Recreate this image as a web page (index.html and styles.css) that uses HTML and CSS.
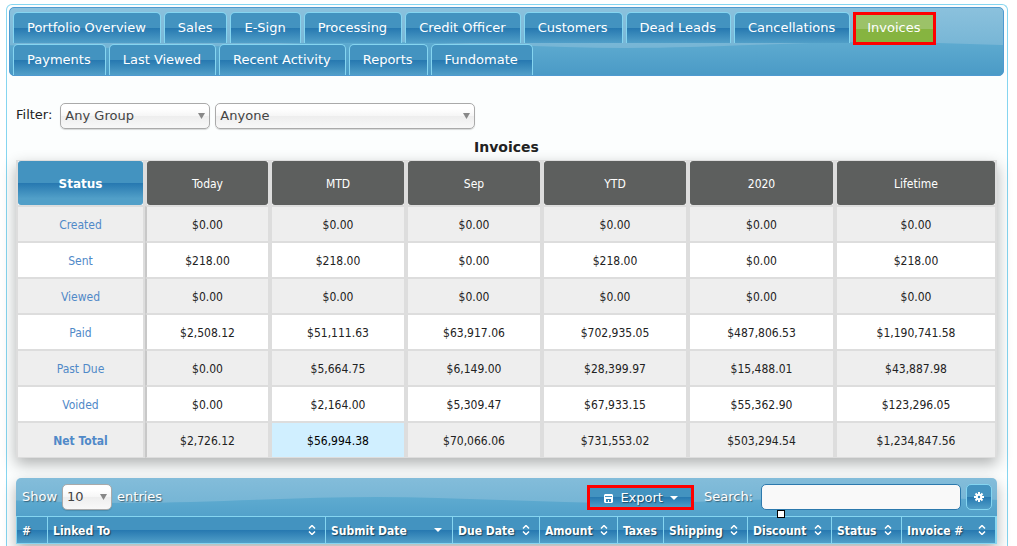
FILE: index.html
```html
<!DOCTYPE html>
<html lang="en">
<head>
<meta charset="utf-8">
<title>Invoices</title>
<link rel="stylesheet" href="styles.css">
</head>
<body>
<div class="panel">
  <nav class="tabs gloss">
    <a class="tab" href="#">Portfolio Overview</a>
    <a class="tab" href="#">Sales</a>
    <a class="tab" href="#">E-Sign</a>
    <a class="tab" href="#">Processing</a>
    <a class="tab" href="#">Credit Officer</a>
    <a class="tab" href="#">Customers</a>
    <a class="tab" href="#">Dead Leads</a>
    <a class="tab" href="#">Cancellations</a>
    <a class="tab tab-active marked" href="#">Invoices</a>
    <a class="tab" href="#">Payments</a>
    <a class="tab" href="#">Last Viewed</a>
    <a class="tab" href="#">Recent Activity</a>
    <a class="tab" href="#">Reports</a>
    <a class="tab" href="#">Fundomate</a>
  </nav>
  <main class="content">
    <form class="filter">
      <label for="group">Filter:</label>
      <select id="group" class="select select-group"><option>Any Group</option></select>
      <select id="user" class="select select-user" aria-label="User"><option>Anyone</option></select>
    </form>
    <h1 class="title">Invoices</h1>
    <table class="summary">
      <colgroup>
        <col class="c-status"><col class="c-today"><col class="c-mtd"><col class="c-mtd"><col class="c-ytd"><col class="c-year"><col class="c-life">
      </colgroup>
      <thead>
        <tr>
          <th><div class="head head-status">Status</div></th>
          <th><div class="head">Today</div></th>
          <th><div class="head">MTD</div></th>
          <th><div class="head">Sep</div></th>
          <th><div class="head">YTD</div></th>
          <th><div class="head">2020</div></th>
          <th><div class="head">Lifetime</div></th>
        </tr>
      </thead>
      <tbody>
        <tr><td><a href="#">Created</a></td><td>$0.00</td><td>$0.00</td><td>$0.00</td><td>$0.00</td><td>$0.00</td><td>$0.00</td></tr>
        <tr><td><a href="#">Sent</a></td><td>$218.00</td><td>$218.00</td><td>$0.00</td><td>$218.00</td><td>$0.00</td><td>$218.00</td></tr>
        <tr><td><a href="#">Viewed</a></td><td>$0.00</td><td>$0.00</td><td>$0.00</td><td>$0.00</td><td>$0.00</td><td>$0.00</td></tr>
        <tr><td><a href="#">Paid</a></td><td>$2,508.12</td><td>$51,111.63</td><td>$63,917.06</td><td>$702,935.05</td><td>$487,806.53</td><td>$1,190,741.58</td></tr>
        <tr><td><a href="#">Past Due</a></td><td>$0.00</td><td>$5,664.75</td><td>$6,149.00</td><td>$28,399.97</td><td>$15,488.01</td><td>$43,887.98</td></tr>
        <tr><td><a href="#">Voided</a></td><td>$0.00</td><td>$2,164.00</td><td>$5,309.47</td><td>$67,933.15</td><td>$55,362.90</td><td>$123,296.05</td></tr>
        <tr><td><a class="net" href="#">Net Total</a></td><td>$2,726.12</td><td class="hover">$56,994.38</td><td>$70,066.06</td><td>$731,553.02</td><td>$503,294.54</td><td>$1,234,847.56</td></tr>
      </tbody>
    </table>
    <section class="list">
      <div class="toolbar gloss">
        <label for="length">Show</label>
        <select id="length" class="select select-length"><option>10</option></select>
        <span>entries</span>
        <button class="export marked" type="button">
          <svg width="9" height="9" viewBox="0 0 9 9" aria-hidden="true"><path fill="#fff" fill-rule="evenodd" d="M1 0h7l1 1v7l-1 1H1L0 8V1zM1 2v1h7V2zM2 5v3h2V6h1v2h2V5z"/></svg>
          Export
          <svg width="8" height="4" viewBox="0 0 8 4" aria-hidden="true"><path fill="#fff" d="M0 0h8L4 4z"/></svg>
        </button>
        <label class="search-label" for="search">Search:</label>
        <div class="search-box"><input id="search" class="search" type="text"><span class="handle"></span></div>
        <button class="gear" type="button" aria-label="Settings">
          <svg width="10" height="10" viewBox="-5 -5 10 10" aria-hidden="true"><g stroke="#fff" stroke-width="2"><path d="M0-5V5M-5 0H5M-3.5-3.5l7 7M-3.5 3.5l7-7"/></g><circle r="3.3" fill="#fff"/><circle r="1.2" fill="#2c81b7"/></svg>
        </button>
      </div>
      <table class="grid">
        <colgroup>
          <col class="g-num"><col class="g-linked"><col class="g-submit"><col class="g-due"><col class="g-amount"><col class="g-taxes"><col class="g-ship"><col class="g-ship"><col class="g-status"><col class="g-inv">
        </colgroup>
        <thead>
          <tr>
            <th>#</th>
            <th class="sort">Linked To</th>
            <th class="sort-desc">Submit Date</th>
            <th class="sort">Due Date</th>
            <th class="sort">Amount</th>
            <th>Taxes</th>
            <th class="sort">Shipping</th>
            <th class="sort">Discount</th>
            <th class="sort">Status</th>
            <th class="sort">Invoice #</th>
          </tr>
        </thead>
      </table>
    </section>
  </main>
</div>
</body>
</html>
```
FILE: styles.css
```css
* { box-sizing: border-box; }

body {
  margin: 0;
  padding: 4px 9px 0 6px;
  background: #fff;
  color: #222;
  font: 13px/16px Verdana, "DejaVu Sans", sans-serif;
}

.panel {
  min-height: calc(100vh - 4px);
  padding: 2px 3px 0 2px;
  border: 1px solid #85d5f0;
  border-bottom: 0;
  border-radius: 6px 6px 0 0;
  background: #fcfefe;
}

.gloss {
  background: #519fca url("data:image/svg+xml,%3Csvg xmlns='http://www.w3.org/2000/svg' width='500' height='100'%3E%3Cdefs%3E%3ClinearGradient id='a' x2='0' y2='1'%3E%3Cstop stop-color='%2393c6e0'/%3E%3Cstop offset='1' stop-color='%2376b5d5'/%3E%3C/linearGradient%3E%3ClinearGradient id='b' x2='0' y2='1'%3E%3Cstop stop-color='%235eabd0'/%3E%3Cstop offset='1' stop-color='%234092c1'/%3E%3C/linearGradient%3E%3C/defs%3E%3Cpath fill='url(%23b)' d='M0 50h500v50H0z'/%3E%3Cpath fill='url(%23a)' d='M-130 0H620V50C540 50 450 56 370 56C290 56 200 50 120 50C40 50-50 56-130 56z'/%3E%3C/svg%3E") repeat-x 50% 50%;
}

.tabs {
  display: flex;
  flex-wrap: wrap;
  gap: 1px 3px;
  padding: 4px 3px 0;
  border: 1px solid #4f9ad0;
  border-radius: 5px;
}

.tab {
  height: 31px;
  padding: 7px 14px 0 13px;
  border: 1px solid #85d5f0;
  border-bottom: 0;
  border-radius: 5px 5px 0 0;
  background: linear-gradient(#4393c0 0 50%, #2678b0 50%, #519fc8);
  color: #fff;
  text-decoration: none;
}

.tab-active {
  border-color: #a6c935;
  background: linear-gradient(#9cc268 0 55%, #86b440 55%);
}

.marked { position: relative; }

.marked::after {
  content: "";
  position: absolute;
  inset: -1px -1px -2px;
  border: 3px solid #f00;
}

.content { padding: 27px 7px 0; }

.filter { display: flex; gap: 5px; }
.filter label { padding: 4px 3px 0 0; }

.select {
  height: 26px;
  padding: 0 4px;
  border: 1px solid #aaa;
  border-radius: 5px;
  appearance: none;
  background:
    url("data:image/svg+xml,%3Csvg xmlns='http://www.w3.org/2000/svg' width='7' height='6'%3E%3Cpath fill='%23888' d='M0 0h7L3.500 6z'/%3E%3C/svg%3E") no-repeat right 4px center,
    linear-gradient(#fff 20%, #f6f6f6 50%, #eee 52%, #f8f8f8);
  box-shadow: 0 1px 1px rgba(0, 0, 0, 0.15);
  color: #444;
  font: inherit;
}
.select-group { width: 150px; }
.select-user { width: 260px; }
.select-length { width: 50px; }

.title {
  margin: 10px 0 5px;
  font-size: 14px;
  line-height: 16px;
  text-align: center;
}

.summary {
  width: 100%;
  table-layout: fixed;
  border-collapse: separate;
  border-spacing: 0;
  box-shadow: 0 6px 14px rgba(0, 0, 0, 0.3);
  font: 12px/16px Tahoma, "DejaVu Sans Condensed", sans-serif;
  text-align: center;
}
.c-status { width: 129px; }
.c-today { width: 125px; }
.c-mtd { width: 136px; }
.c-ytd { width: 146px; }
.c-year { width: 147px; }
.c-life { width: 162px; }

.summary th {
  padding: 0;
  border: 1px solid #ddd;
  border-width: 1px 2px;
  background: #fff;
}
.head {
  height: 44px;
  border-radius: 3px;
  background: #5d5f5e;
  color: #fff;
  font-weight: normal;
  line-height: 46px;
}
.head-status {
  background: linear-gradient(#4393c0 0 50%, #2678b0 50%, #519fc8 85%);
  font-weight: bold;
  font-family: Verdana, "DejaVu Sans", sans-serif;
}
.summary td {
  height: 36px;
  padding: 2px 0 0;
  border: 1px solid #ddd;
  border-width: 1px 2px;
  background: #fff;
}
.summary tbody tr:nth-child(odd) td { background: #eee; }
.summary td:nth-child(2) { border-left-color: #c8c8c8; }
.summary tbody tr td.hover { background: #d0efff; color: #000; }
.summary a { color: #5089c8; text-decoration: none; }
.summary .net { font-weight: bold; }

.list {
  margin-top: 20px;
  border-radius: 5px 5px 0 0;
  box-shadow: 0 6px 14px rgba(0, 0, 0, 0.3);
}

.toolbar {
  display: flex;
  align-items: center;
  gap: 5px;
  height: 38px;
  padding: 0 5px 0 6px;
  border-radius: 5px 5px 0 0;
  color: #fff;
  text-shadow: 1px 1px 1px rgba(0, 0, 0, 0.45);
}
.search-label { padding-right: 3px; }

.export {
  display: flex;
  align-items: center;
  gap: 7px;
  height: 24px;
  margin: 0 5px 0 auto;
  padding: 2px 15px 0 16px;
  border: 1px solid #85d5f0;
  background: linear-gradient(#4393c0 0 50%, #2678b0 50%, #519fc8);
  color: #fff;
  font: inherit;
  text-shadow: inherit;
}

.search-box { position: relative; }
.search {
  display: block;
  width: 200px;
  height: 26px;
  padding: 0 5px;
  border: 1px solid #2c79ad;
  border-radius: 5px;
  background: #f9f9f9;
  font: inherit;
}
.handle {
  position: absolute;
  top: 26px;
  left: 16px;
  width: 8px;
  height: 8px;
  border: 1px solid #000;
  background: #fff;
}

.gear {
  display: grid;
  place-items: center;
  width: 26px;
  height: 26px;
  padding: 0;
  border: 1px solid #85d5f0;
  border-radius: 5px;
  background: linear-gradient(#4393c0 0 50%, #2678b0 50%, #519fc8);
}

.grid {
  width: 100%;
  table-layout: fixed;
  border-collapse: separate;
  border-spacing: 0;
  border-right: 1px solid #85d5f0;
  font: bold 12px/16px Tahoma, "DejaVu Sans Condensed", sans-serif;
}
.grid th {
  height: 28px;
  padding: 2px 0 0 5px;
  border: 1px solid #85d5f0;
  border-width: 1px 1px 1px 0;
  background: linear-gradient(#4393c0 0 50%, #2678b0 50%, #519fc8);
  color: #fff;
  text-align: left;
  text-shadow: 1px 1px 1px rgba(0, 0, 0, 0.5);
  white-space: nowrap;
}
.grid th:first-child { border-left-width: 1px; }
.grid .sort {
  background:
    url("data:image/svg+xml,%3Csvg xmlns='http://www.w3.org/2000/svg' width='8' height='10'%3E%3Cpath fill='none' stroke='%23fff' stroke-width='1.500' d='M1 3.500l3-3 3 3M1 6.500l3 3 3-3'/%3E%3C/svg%3E") no-repeat right 9px center,
    linear-gradient(#4393c0 0 50%, #2678b0 50%, #519fc8);
}
.grid .sort-desc {
  background:
    url("data:image/svg+xml,%3Csvg xmlns='http://www.w3.org/2000/svg' width='8' height='4'%3E%3Cpath fill='%23fff' d='M0 0h8L4 4z'/%3E%3C/svg%3E") no-repeat right 10px center,
    linear-gradient(#4393c0 0 50%, #2678b0 50%, #519fc8);
}
.g-num { width: 32px; }
.g-linked { width: 278px; }
.g-submit { width: 127px; }
.g-due { width: 87px; }
.g-amount { width: 78px; }
.g-taxes { width: 46px; }
.g-ship { width: 84px; }
.g-status { width: 70px; }
.g-inv { width: 94px; }
```
